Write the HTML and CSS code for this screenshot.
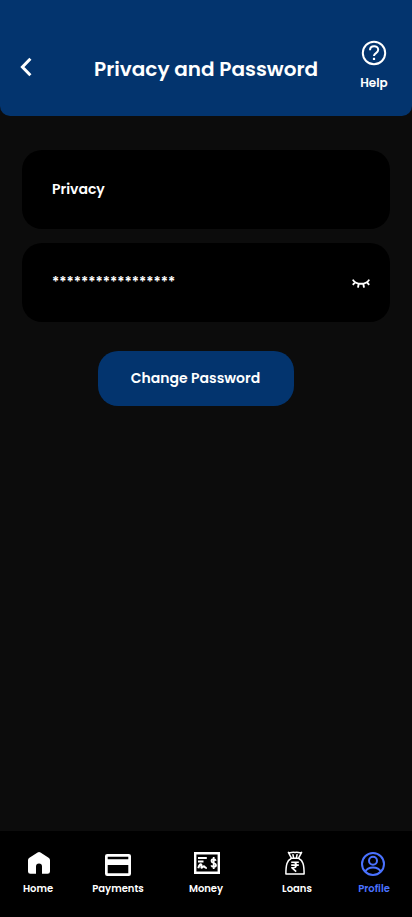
FILE: index.html
```html
<!DOCTYPE html>
<html lang="en">
<head>
<meta charset="utf-8">
<meta name="viewport" content="width=device-width, initial-scale=1">
<title>Privacy and Password</title>
<link rel="stylesheet" href="styles.css">
</head>
<body>
<header class="header">
  <a class="back" aria-label="Back"><svg width="12" height="20" viewBox="0 0 12 20" fill="none" stroke="currentColor" stroke-width="3"><path d="M10.400 1.800 2.400 10l8 8.200"/></svg></a>
  <h1 class="title">Privacy and Password</h1>
  <a class="help">
    <svg width="26" height="26" viewBox="0 0 26 26" fill="none" stroke="currentColor" stroke-width="2"><circle cx="13" cy="13" r="11.200"/><path d="M9 10.200C9 4.800 17.200 5 17.200 9.800c0 3.300-4.200 3.200-4.200 6.200"/><path d="M13 17.800v2.200" stroke-width="2.200"/></svg>
    <span>Help</span>
  </a>
</header>
<main class="content">
  <section class="card"><span class="card-label">Privacy</span></section>
  <section class="card">
    <span class="mask">*****************</span>
    <svg class="eye" width="20" height="12" viewBox="0 0 20 12" fill="none" stroke="currentColor" stroke-width="1.900"><path d="M1.800 1.600C5 7.200 15 7.200 18.200 1.600M4.200 4.200 1.800 6.800M7.700 5.700 7 9.600M12.300 5.700l.7 3.900M15.800 4.200l2.400 2.600"/></svg>
  </section>
  <button class="change">Change Password</button>
</main>
<nav class="nav">
  <a class="tab">
    <svg class="nudge" width="26" height="26" viewBox="0 0 26 26" fill="currentColor"><path d="M11.600 2.500a2.600 2.600 0 0 1 2.900 0l8.100 5.300A2.800 2.800 0 0 1 24 10.100V21.400a2.400 2.400 0 0 1-2.400 2.400H16V16.500a3 3 0 0 0-6 0v7.300H4.400A2.400 2.400 0 0 1 2 21.400V10.100a2.800 2.800 0 0 1 1.400-2.300Z"/></svg>
    <span>Home</span>
  </a>
  <a class="tab">
    <svg width="26" height="26" viewBox="0 0 26 26" fill="currentColor" fill-rule="evenodd"><path d="M2.200 3.900h21.600A2.200 2.200 0 0 1 26 6.100v17.600a2.200 2.200 0 0 1-2.200 2.200H2.200A2.200 2.200 0 0 1 0 23.700V6.100a2.200 2.200 0 0 1 2.200-2.200ZM2.700 6.700v2.600h20.600V6.700ZM2.700 15v8.200h20.600V15Z"/></svg>
    <span>Payments</span>
  </a>
  <a class="tab">
    <svg class="nudge" width="26" height="26" viewBox="0 0 26 26" fill="none" stroke="currentColor"><path d="M1.200 3.200h23.600v19.600H1.200Z" stroke-width="2.400"/><path d="M4 8h8.800M4 11.500h5.500" stroke-width="2"/><path d="M4.300 18.300c.9-3.600 2.300-4.700 3-3.800.8 1-.6 3.300.5 3.200 1-.1 1.500-1.900 2.300-1.400.7.500.7 1.700 2.700 1.600" stroke-width="2"/><path d="M21.800 10.700C21 8.500 17.500 8.700 17.500 10.900c0 2.700 4.500 1.500 4.500 4.200 0 2.400-3.800 2.600-4.800.3M19.700 7v12" stroke-width="1.800"/></svg>
    <span>Money</span>
  </a>
  <a class="tab">
    <svg class="bag" width="26" height="26" viewBox="0 0 26 26" fill="none" stroke="currentColor" stroke-width="1.500" stroke-linejoin="round"><path d="M9.300 7.800 6.400 2.300c2.200 1.100 3.900-.6 6.600.2 2.700-.8 4.400.9 6.600-.2l-2.900 5.500M8.700 8.300h8.600M10.800 4.200l.8 3.400M15.200 4.200l-.8 3.400"/><path d="M9.200 8.500C5 10.500 3.900 14.500 3.900 24h18.200c0-9.500-1.100-13.500-5.300-15.500"/><path d="M9.200 12.300h7.600M9.200 15.100h7.600M9.400 12.300h1.800c4 0 4 5.400 0 5.400H9.800l4.400 4" stroke-width="1.600"/></svg>
    <span>Loans</span>
  </a>
  <a class="tab active">
    <svg width="26" height="26" viewBox="0 0 26 26" fill="none" stroke="currentColor" stroke-width="2"><circle cx="12" cy="14" r="11"/><circle cx="12" cy="10.700" r="4"/><path d="M4.300 21.600c2.500-5.500 12.900-5.500 15.400 0"/></svg>
    <span>Profile</span>
  </a>
</nav>
</body>
</html>
```

FILE: styles.css
```css
* { box-sizing: border-box; }
body {
  margin: 0;
  height: 917px;
  display: flex;
  flex-direction: column;
  background: #0c0c0c;
  color: #fff;
  font-family: Poppins, Inter, sans-serif;
  font-weight: 600;
}
svg { display: block; flex: none; }
.header {
  height: 116px;
  padding: 40px 24px 0 20px;
  display: grid;
  grid-template-columns: 74px 224px 1fr;
  background: #03346e;
  border-radius: 0 0 10px 10px;
}
.back { padding-top: 17px; }
.title {
  margin: 0;
  padding-top: 14px;
  font-size: 20px;
  line-height: 30px;
  font-weight: 600;
  white-space: nowrap;
}
.help {
  justify-self: end;
  width: 28px;
  display: flex;
  flex-direction: column;
  align-items: center;
  gap: 8px;
  font-size: 12px;
  line-height: 18px;
}
.content {
  flex: 1;
  padding: 34px 22px 0;
  display: flex;
  flex-direction: column;
  gap: 14px;
}
.card {
  height: 79px;
  padding: 0 19px 0 30px;
  display: flex;
  align-items: center;
  justify-content: space-between;
  background: #000;
  border-radius: 20px;
}
.card-label { font-size: 14px; }
.mask { font-size: 14px; }
.eye { margin-top: 3px; }
.change {
  width: 196px;
  height: 55px;
  margin: 15px 0 0 76px;
  padding: 0 1px 0 0;
  border: 0;
  border-radius: 20px;
  background: #03346e;
  color: #fff;
  font: 600 14px/21px Poppins, Inter, sans-serif;
}
.nav {
  height: 86px;
  padding-top: 19px;
  display: grid;
  grid-template-columns: 76px 84px 92px 90px 64px;
  background: #000;
}
.tab {
  display: flex;
  flex-direction: column;
  align-items: center;
  gap: 5px;
  font-size: 10px;
  line-height: 15px;
}
.nudge { margin-left: 2px; }
.bag { margin-left: -4px; }
.active { color: #4a72ff; }
```
